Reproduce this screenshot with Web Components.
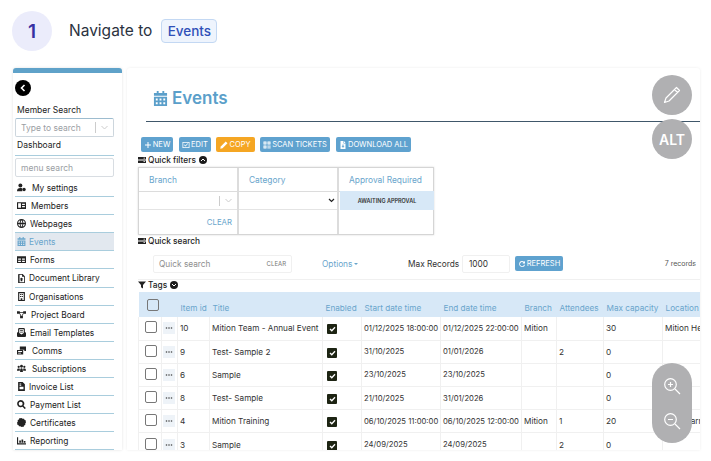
<!DOCTYPE html>
<html>
<head>
<meta charset="utf-8">
<title>Navigate to Events</title>
<style>
  html, body { margin: 0; background: #fff; }
  body { width: 711px; height: 461px; overflow: hidden; position: relative; font-family: Inter, "Liberation Sans", sans-serif; color: #222; }
  .stage { display: flex; gap: 5px; margin-left: 13px; width: 687px; height: 382px; }
</style>
</head>
<body>
<step-header number="1" label="Navigate to" target="Events"></step-header>
<div class="stage">
  <side-nav></side-nav>
  <events-page></events-page>
</div>
<float-tools></float-tools>

<script>
// small icon set, all on a 16x16 box
const ICONS = {
  user: '<circle cx="6" cy="4.500" r="3.500"/><path d="M0 14.500c0-4 2-5.500 6-5.500 1.400 0 2.500.2 3.300.6v4.900z"/><circle cx="12.500" cy="11.500" r="3"/>',
  card: '<path fill-rule="evenodd" d="M0 2h16v12H0zM2 4v8h5V4zm7 1v2h5V5zm0 4v2h5V9z"/>',
  globe: '<path fill-rule="evenodd" d="M8 0a8 8 0 1 1 0 16A8 8 0 0 1 8 0zM1.800 6.500h3.100c.1-1.500.4-3 1-4.200A6 6 0 0 0 1.800 6.500zm4.600 0h3.200C9.400 4.500 8.800 2.800 8 2c-.8.8-1.400 2.500-1.600 4.500zm4.700 0h3.100a6 6 0 0 0-4.100-4.200c.6 1.200.9 2.700 1 4.200zM1.800 9.500a6 6 0 0 0 4.100 4.200c-.6-1.200-.9-2.700-1-4.200zm4.600 0c.2 2 .8 3.700 1.600 4.500.8-.8 1.400-2.500 1.600-4.500zm4.700 0c-.1 1.500-.4 3-1 4.200a6 6 0 0 0 4.100-4.200z"/>',
  calendar: '<path fill-rule="evenodd" d="M4 0h2v2h4V0h2v2h3v3H1V2h3zM1 6h14v10H1zm2 2v2h2V8zm4 0v2h2V8zm4 0v2h2V8zm-8 4v2h2v-2zm4 0v2h2v-2zm4 0v2h2v-2z"/>',
  table: '<path fill-rule="evenodd" d="M0 2h16v12H0zm2 4v2.500h5V6zm7 0v2.500h5V6zm-7 4v2.500h5V10zm7 0v2.500h5V10z"/>',
  file: '<path fill-rule="evenodd" d="M3 0h7l4 4v12H2V1zm1.500 1.500v13h8V5H9V1.500zM8 6.500a2.200 2.200 0 0 1 1.500 3.800V13h-3v-2.700A2.200 2.200 0 0 1 8 6.500z"/>',
  building: '<path fill-rule="evenodd" d="M2 0h12v16H2zm2 2v12h2.500v-3h3v3H12V2zm1.500 1.500h2v2h-2zm3 0h2v2h-2zm-3 3.500h2v2h-2zm3 0h2v2h-2z"/>',
  sitemap: '<path d="M0 2h5v4.500H0zM11 2h5v4.500h-5zM5.500 10h5v4.500h-5zM5 3.500h6v1.500H5zM4 6h1.500l2.500 4.500H6.500zM12 6h-1.500L8 10.500h1.500z"/>',
  mail: '<path fill-rule="evenodd" d="M4 0h8a2 2 0 0 1 2 2v5l2 1.500V14a2 2 0 0 1-2 2H2a2 2 0 0 1-2-2V8.500L2 7V2a2 2 0 0 1 2-2zm0 2v7l4 2.500L12 9V2z"/><path d="M5.500 4h5v1.500h-5zM5.500 6.500h5V8h-5z"/>',
  comms: '<path fill-rule="evenodd" d="M5 1h11v8h-3V6.500H5zM0 7h11v8H0zm2 2v1.500h7V9zm0 3v1.500h5V12z"/>',
  group: '<circle cx="3" cy="5" r="2"/><circle cx="8" cy="4" r="2.500"/><circle cx="13" cy="5" r="2"/><path d="M0 12c0-3 1-4 3-4s2 .5 2 1v3zM5.500 14c0-5 .5-6.500 2.500-6.500S10.500 9 10.500 14zM11 12V9c0-.5 0-1 2-1s3 1 3 4z"/>',
  invoice: '<path fill-rule="evenodd" d="M2 0h8l4 4v12H2zm2.500 2.500V4h3V2.500zm0 2.500v1.500h3V5zm0 3.500v4.500h7V8.500z"/>',
  search: '<path fill-rule="evenodd" d="M6.500 0a6.500 6.500 0 0 1 5.200 10.400l4 4-1.800 1.800-4-4A6.500 6.500 0 1 1 6.500 0zm0 3a3.500 3.500 0 1 0 0 7 3.500 3.500 0 0 0 0-7z"/>',
  cert: '<path d="M8 0l2 1.500 2.500-.3 1 2.300 2.300 1-.3 2.500L16 8l-1.500 2 .3 2.500-2.300 1-1 2.300-2.500-.3L8 16l-2-1.500-2.500.3-1-2.300-2.300-1 .3-2.500L0 8l1.500-2-.3-2.500 2.300-1 1-2.300 2.500.3z"/>',
  chart: '<path d="M0 2h2v11h14v2H0zM4 8h3v4H4zM8 6h3v6H8zM12 9h3v3h-3z"/>',
  plus: '<path d="M7 2h2v5h5v2H9v5H7V9H2V7h5z"/>',
  edit: '<path fill-rule="evenodd" d="M1 2h14v12H1zm1.500 1.500v9h11v-9zM4 8l1-1 2 2 4-4.500 1 1-5 5.500z"/>',
  pencil: '<path d="M11.500 1l3.500 3.500L5 14.500l-4.500 1 1-4.500z"/>',
  qr: '<path fill-rule="evenodd" d="M1 1h6v6H1zm2 2v2h2V3zM9 1h6v6H9zm2 2v2h2V3zM1 9h6v6H1zm2 2v2h2v-2zm6-2h2.500v2.500H9zm3.500 0H15v2.500h-2.500zM9 12.500h2.500V15H9zm3.500 0H15V15h-2.500z"/>',
  download: '<path fill-rule="evenodd" d="M3 0h6v5h4v11H3zm5 7H7v3.500H5l3 3 3-3H9V7zM10 0l3 4h-3z"/>',
  server: '<path fill-rule="evenodd" d="M0 2h16v5H0zm0 7h16v5H0zm11-5.500V5h3V3.500zm0 7V12h3v-1.500z"/>',
  refresh: '<path d="M8 2a6 6 0 0 1 4.200 1.700L14 2v5H9l1.800-1.800A4 4 0 1 0 12 9.500h2.200A6 6 0 1 1 8 2z"/>',
  funnel: '<path d="M0 1h16L10 8v7l-4-2.500V8z"/>',
  more: '<circle cx="3" cy="8" r="1.600"/><circle cx="8" cy="8" r="1.600"/><circle cx="13" cy="8" r="1.600"/>'
};
const icon = (name, size, color) =>
  `<svg viewBox="0 0 16 16" width="${size}" height="${size}" fill="${color || 'currentColor'}" style="flex:none;display:block">${ICONS[name]}</svg>`;

class StepHeader extends HTMLElement {
  connectedCallback() {
    this.attachShadow({ mode: 'open' }).innerHTML = `
      <style>
        :host { display: flex; align-items: center; height: 68px; padding: 0 0 6px 12px; box-sizing: border-box; font-family: Inter, "Liberation Sans", sans-serif; }
        .num { width: 40px; height: 40px; border-radius: 50%; background: #ebecfb; color: #3730a3; display: flex; align-items: center; justify-content: center; font-size: 19px; font-weight: 600; }
        .label { margin: -2px 0 0 17px; font-size: 15.500px; color: #2b3240; }
        .tag { margin: -1px 0 0 9px; height: 24px; width: 56px; box-sizing: border-box; display: flex; align-items: center; justify-content: center; background: #eef4fd; border: 1px solid #c3d8f3; border-radius: 4px; color: #2f50b8; font-size: 13.500px; font-weight: 500; }
      </style>
      <div class="num">${this.getAttribute('number')}</div>
      <div class="label">${this.getAttribute('label')}</div>
      <div class="tag">${this.getAttribute('target')}</div>`;
  }
}
customElements.define('step-header', StepHeader);

class NavItem extends HTMLElement {
  connectedCallback() {
    const active = this.hasAttribute('active');
    const gap = this.getAttribute('gap') || 5;
    this.attachShadow({ mode: 'open' }).innerHTML = `
      <style>
        :host { display: flex; align-items: center; height: ${this.getAttribute('h') || 18}px; box-sizing: border-box; padding-left: 2px; border-bottom: 1px solid #a9cddd; font-size: 8.400px; color: ${active ? '#69a5cc' : '#222'}; background: ${active ? '#e2e8ef' : 'transparent'}; white-space: nowrap; }
        span { margin-left: ${gap}px; }
      </style>
      ${icon(this.getAttribute('icon'), 9)}<span><slot></slot></span>`;
  }
}
customElements.define('nav-item', NavItem);

class SideNav extends HTMLElement {
  connectedCallback() {
    const items = [
      ['user', 'My settings', 6], ['card', 'Members', 5], ['globe', 'Webpages', 4], ['calendar', 'Events', 3, true],
      ['table', 'Forms', 4], ['file', 'Document Library', 3, false, 19], ['building', 'Organisations', 3], ['sitemap', 'Project Board', 5],
      ['mail', 'Email Templates', 4], ['comms', 'Comms', 6], ['group', 'Subscriptions', 6], ['invoice', 'Invoice List', 3],
      ['search', 'Payment List', 4], ['cert', 'Certificates', 4], ['chart', 'Reporting', 4]
    ];
    this.attachShadow({ mode: 'open' }).innerHTML = `
      <style>
        :host { display: flex; flex-direction: column; width: 109px; height: 382px; box-sizing: border-box; border-top: 5px solid #5fa2c9; padding: 0 8px 0 2px; background: #fff; box-shadow: 0 0 3px rgba(0,0,0,.12); border-radius: 3px 3px 0 0; font-size: 8.500px; overflow: hidden; }
        .back { width: 16px; height: 16px; border-radius: 50%; background: #000; margin: 7px 0 0 0; display: flex; align-items: center; justify-content: center; }
        .cap { margin: 8px 0 0 2px; height: 12px; line-height: 12px; }
        .box { height: 19px; flex: none; box-sizing: border-box; border: 1px solid #d8dde2; border-radius: 2px; display: flex; align-items: center; padding-left: 5px; color: #9a9ea3; font-size: 8.500px; }
        .sel { margin-top: 2px; border-color: #cdd6dd; border-top-color: #9dbccf; justify-content: space-between; padding-right: 0; }
        .arr { display: flex; align-items: center; height: 11px; padding: 0 5px 0 5px; border-left: 1px solid #ccc; }
        .dash { height: 19px; flex: none; box-sizing: border-box; padding: 3px 0 0 2px; border-bottom: 1px solid #a9cddd; }
        .menu { margin-top: 2px; margin-bottom: 2px; }
      </style>
      <div class="back"><svg width="8" height="8" viewBox="0 0 8 8"><path d="M5.500 1L2.500 4l3 3" fill="none" stroke="#fff" stroke-width="1.600"/></svg></div>
      <div class="cap">Member Search</div>
      <div class="box sel">Type to search<span class="arr"><svg width="7" height="5" viewBox="0 0 7 5"><path d="M.5 1l3 3 3-3" fill="none" stroke="#ccc"/></svg></span></div>
      <div class="dash">Dashboard</div>
      <div class="box menu">menu search</div>
      ${items.map(([i, t, g, a, h]) => `<nav-item icon="${i}" gap="${g}" ${h ? `h="${h}"` : ''} ${a ? 'active' : ''}>${t}</nav-item>`).join('')}`;
  }
}
customElements.define('side-nav', SideNav);

class ToolButton extends HTMLElement {
  connectedCallback() {
    const color = this.getAttribute('color') || '#5fa2cf';
    this.attachShadow({ mode: 'open' }).innerHTML = `
      <style>
        :host { display: inline-flex; align-items: center; justify-content: center; gap: 1px; height: 15px; box-sizing: border-box; background: ${color}; color: #fff; border-radius: 2px; font-size: 7.500px; white-space: nowrap; }
      </style>
      ${icon(this.getAttribute('icon'), 8)}<slot></slot>`;
  }
}
customElements.define('tool-button', ToolButton);

class SectionLabel extends HTMLElement {
  connectedCallback() {
    const toggle = this.getAttribute('toggle');
    this.attachShadow({ mode: 'open' }).innerHTML = `
      <style>
        :host { display: flex; align-items: center; gap: 2px; height: 12px; font-size: 8.300px; font-weight: 500; color: #222; white-space: nowrap; }
        .t { width: 8px; height: 8px; border-radius: 50%; background: #1c1c1c; display: flex; align-items: center; justify-content: center; margin-left: 1px; }
      </style>
      ${icon(this.getAttribute('icon'), 8)}<slot></slot>
      ${toggle ? `<span class="t"><svg width="6" height="6" viewBox="0 0 6 6"><path d="${toggle === 'up' ? 'M1 4l2-2 2 2' : 'M1 2l2 2 2-2'}" fill="none" stroke="#fff" stroke-width="1"/></svg></span>` : ''}`;
  }
}
customElements.define('section-label', SectionLabel);

class FilterPanel extends HTMLElement {
  connectedCallback() {
    this.attachShadow({ mode: 'open' }).innerHTML = `
      <style>
        :host { display: grid; grid-template-columns: 100px 100px 95px; width: 296px; height: 68px; box-sizing: border-box; border: 1px solid #d5d5d5; box-shadow: 0 0 2px rgba(0,0,0,.15); font-size: 8.400px; color: #69a5cc; }
        .col { display: grid; grid-template-rows: 24px 18px 1fr; border-right: 2px solid #dcdcdc; }
        .col:last-child { border-right: 0; }
        .head { display: flex; align-items: center; padding-left: 10px; border-bottom: 1px solid #dcdcdc; }
        .ctl { border-bottom: 1px solid #e4e4e4; display: flex; align-items: center; justify-content: flex-end; }
        .arr { display: flex; align-items: center; height: 10px; border-left: 1px solid #ccc; padding: 0 5px; }
        .clear { display: flex; justify-content: flex-end; align-items: center; padding-right: 5px; font-size: 7.800px; }
        .opt { background: #d7e8f7; color: #333; font-size: 5.500px; font-weight: 600; display: flex; align-items: center; justify-content: center; margin-left: 1px; margin-top: -1px; }
      </style>
      <div class="col"><div class="head">Branch</div>
        <div class="ctl"><span class="arr"><svg width="7" height="5" viewBox="0 0 7 5"><path d="M.5 1l3 3 3-3" fill="none" stroke="#ccc"/></svg></span></div>
        <div class="clear">CLEAR</div></div>
      <div class="col"><div class="head">Category</div>
        <div class="ctl"><svg style="margin-right:2px" width="7" height="5" viewBox="0 0 7 5"><path d="M1 1l2.500 2.500L6 1" fill="none" stroke="#222" stroke-width="1.200"/></svg></div><div></div></div>
      <div class="col"><div class="head">Approval Required</div><div class="opt">AWAITING APPROVAL</div><div></div></div>`;
  }
}
customElements.define('filter-panel', FilterPanel);

class SearchBar extends HTMLElement {
  connectedCallback() {
    this.attachShadow({ mode: 'open' }).innerHTML = `
      <style>
        :host { display: flex; align-items: center; height: 19px; padding-left: 15px; font-size: 8.300px; color: #333; white-space: nowrap; }
        .q { width: 139px; height: 18px; box-sizing: border-box; border: 1px solid #f0f0f0; border-radius: 2px; display: flex; align-items: center; justify-content: space-between; padding: 0 5px; color: #8e8e8e; }
        .q small { font-size: 6px; color: #777; }
        .opt { margin-left: 30px; width: 36px; color: #69a5cc; display: flex; align-items: center; gap: 2px; }
        .opt i { border: 2px solid transparent; border-top-color: #69a5cc; border-bottom: 0; }
        .max { margin-left: 50px; width: 49px; }
        .num { width: 48px; height: 18px; box-sizing: border-box; border: 1px solid #f0f0f0; border-radius: 2px; margin-left: 5px; padding-left: 6px; display: flex; align-items: center; }
        .ref { margin-left: 5px; width: 48px; }
        .cnt { margin-left: auto; margin-right: 4px; font-size: 7px; color: #555; }
      </style>
      <div class="q">Quick search<small>CLEAR</small></div>
      <div class="opt">Options<i></i></div>
      <div class="max">Max Records</div>
      <div class="num">1000</div>
      <tool-button class="ref" icon="refresh">REFRESH</tool-button>
      <div class="cnt">7 records</div>`;
  }
}
customElements.define('search-bar', SearchBar);

class EventTable extends HTMLElement {
  connectedCallback() {
    const widths = [23, 16, 32, 113, 39, 79, 81, 35, 47, 59, 100];
    const heads = ['', '', 'Item id', 'Title', 'Enabled', 'Start date time', 'End date time', 'Branch', 'Attendees', 'Max capacity', 'Location'];
    const rows = [
      ['10', 'Mition Team - Annual Event', '01/12/2025 18:00:00', '01/12/2025 22:00:00', 'Mition', '', '30', 'Mition Head Office'],
      ['9', 'Test- Sample 2', '31/10/2025', '01/01/2026', '', '2', '0', ''],
      ['6', 'Sample', '23/10/2025', '23/10/2025', '', '', '0', ''],
      ['8', 'Test- Sample', '21/10/2025', '31/01/2026', '', '', '0', ''],
      ['4', 'Mition Training', '06/10/2025 11:00:00', '06/10/2025 12:00:00', 'Mition', '1', '20', 'Main Farm'],
      ['3', 'Sample', '24/09/2025', '24/09/2025', '', '2', '0', '']
    ];
    const tick = `<span class="on"><svg width="7" height="6" viewBox="0 0 7 6"><path d="M1 3l1.800 1.800L6 1.200" fill="none" stroke="#fff" stroke-width="1.300"/></svg></span>`;
    this.attachShadow({ mode: 'open' }).innerHTML = `
      <style>
        :host { display: block; width: 624px; font-size: 8.200px; color: #333; }
        table { table-layout: fixed; width: 624px; border-collapse: collapse; }
        th { height: 25px; box-sizing: border-box; background: #d7e8f7; color: #69a5cc; font-weight: 400; text-align: left; padding: 7px 0 0 3px; white-space: nowrap; overflow: hidden; }
        td { height: 23.200px; box-sizing: border-box; border: 1px solid #f0f0f0; border-top: 0; padding: 0 0 0 2px; white-space: nowrap; overflow: hidden; }
        td.dt { font-size: 7.700px; }
        .box { display: block; width: 10px; height: 10px; border: 1px solid #777; border-radius: 2px; margin-left: 4px; margin-top: -2px; }
        th .box { margin: -6px 0 0 5px; }
        .dots { display: flex; align-items: center; justify-content: center; width: 12px; height: 12px; background: #eef3f8; color: #444; }
        .on { display: flex; align-items: center; justify-content: center; width: 10px; height: 10px; background: #1d2413; border-radius: 1px; margin: 2px 0 0 2px; }
      </style>
      <table>
        <colgroup>${widths.map(w => `<col style="width:${w}px">`).join('')}</colgroup>
        <tr>${heads.map((h, i) => `<th>${i === 0 ? '<span class="box"></span>' : h}</th>`).join('')}</tr>
        ${rows.map(r => `<tr>
          <td><span class="box"></span></td>
          <td style="padding:0 0 0 1px"><span class="dots">${icon('more', 8)}</span></td>
          <td>${r[0]}</td><td>${r[1]}</td><td>${tick}</td>
          <td class="dt">${r[2]}</td><td class="dt">${r[3]}</td><td>${r[4]}</td><td>${r[5]}</td><td>${r[6]}</td><td>${r[7]}</td></tr>`).join('')}
      </table>`;
  }
}
customElements.define('event-table', EventTable);

class EventsPage extends HTMLElement {
  connectedCallback() {
    this.attachShadow({ mode: 'open' }).innerHTML = `
      <style>
        :host { display: block; width: 573px; height: 382px; box-sizing: border-box; padding-left: 11px; background: #fff; box-shadow: 0 0 3px rgba(0,0,0,.08); border-radius: 3px 3px 0 0; overflow: hidden; }
        .title { display: flex; align-items: center; gap: 4px; height: 53px; box-sizing: border-box; padding: 7px 0 0 15px; color: #5b9fca; font-size: 17px; font-weight: 600; }
        .rule { height: 1px; margin-left: 8px; background: #40576a; }
        .tools { display: flex; margin: 15px 0 0 3px; }
        .tools tool-button { margin-right: 5px; }
        .lab { margin-top: 2px; }
        .flt { margin-top: 1px; }
        .sep { height: 1px; background: #f0f0f0; margin-top: 6px; }
        .srch { margin-top: 7px; }
        .tags { margin: -1px 0 1px; }
      </style>
      <div class="title">${icon('calendar', 15)}Events</div>
      <div class="rule"></div>
      <div class="tools">
        <tool-button style="width:32px;margin-right:6px" icon="plus">NEW</tool-button>
        <tool-button style="width:32px" icon="edit">EDIT</tool-button>
        <tool-button style="width:39px" icon="pencil" color="#f5a623">COPY</tool-button>
        <tool-button style="width:70px;margin-right:6px" icon="qr">SCAN TICKETS</tool-button>
        <tool-button style="width:75px" icon="download">DOWNLOAD ALL</tool-button>
      </div>
      <section-label class="lab" icon="server" toggle="up">Quick filters</section-label>
      <filter-panel class="flt"></filter-panel>
      <section-label icon="server">Quick search</section-label>
      <search-bar class="srch"></search-bar>
      <div class="sep"></div>
      <section-label class="tags" icon="funnel" toggle="down">Tags</section-label>
      <event-table></event-table>`;
  }
}
customElements.define('events-page', EventsPage);

// the round grey helpers that sit over the page
class FloatTools extends HTMLElement {
  connectedCallback() {
    const lens = sign => `<svg width="20" height="20" viewBox="0 0 20 20" fill="none" stroke="#fff" stroke-width="1.200"><circle cx="8.500" cy="8.500" r="5.800"/><path d="M13 13l5 5M6 8.500h5${sign ? 'M8.500 6v5' : ''}"/></svg>`;
    this.attachShadow({ mode: 'open' }).innerHTML = `
      <style>
        :host { position: absolute; left: 652px; top: 75px; width: 40px; height: 368px; display: block; }
        div { position: absolute; left: 0; width: 40px; background: #b0b0b2; color: #fff; display: flex; align-items: center; justify-content: center; }
        .pen { top: 0; height: 40px; border-radius: 50%; }
        .alt { top: 44px; height: 40px; border-radius: 50%; font: 600 14px Inter, "Liberation Sans", sans-serif; }
        .zoom { top: 288px; height: 80px; border-radius: 20px; flex-direction: column; gap: 15px; }
      </style>
      <div class="pen"><svg width="20" height="20" viewBox="0 0 20 20" fill="none" stroke="#fff" stroke-width="1.200" stroke-linejoin="round"><path d="M14.500 2.500l3 3L7 16l-4.500 1.500L4 13zM12.500 4.500l3 3"/></svg></div>
      <div class="alt">ALT</div>
      <div class="zoom">${lens(true)}${lens(false)}</div>`;
  }
}
customElements.define('float-tools', FloatTools);
</script>
</body>
</html>
